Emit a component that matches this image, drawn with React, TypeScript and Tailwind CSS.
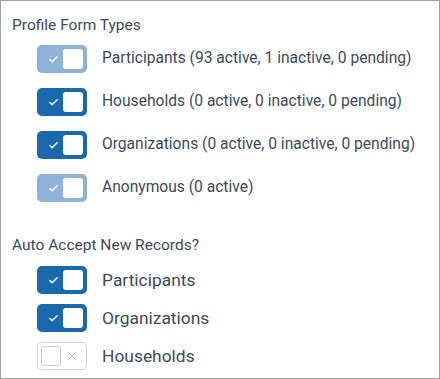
import { Check, X } from 'lucide-react'

type ToggleState = 'on' | 'disabled' | 'off'

function Toggle({ state }: { state: ToggleState }) {
  if (state === 'off') {
    return (
      <div className="flex h-[28px] w-[50px] shrink-0 items-center rounded-[5px] border border-[#d0d4d9] bg-white px-[3px]">
        <div className="h-[20px] w-[20px] rounded-[3px] border border-[#c6cbd1] bg-white" />
        <X className="ml-[5px] h-[12px] w-[12px] text-[#b8bec6]" strokeWidth={2} />
      </div>
    )
  }
  const bg = state === 'on' ? 'bg-[#1b69ad]' : 'bg-[#8db3d8]'
  return (
    <div className={`flex h-[28px] w-[50px] shrink-0 items-center justify-between rounded-[5px] ${bg} pl-[11px] pr-[4px]`}>
      <Check className="h-[11px] w-[11px] text-white" strokeWidth={3} />
      <div className="h-[20px] w-[20px] rounded-[3px] bg-white" />
    </div>
  )
}

const profileTypes: { label: string; state: ToggleState }[] = [
  { label: 'Participants (93 active, 1 inactive, 0 pending)', state: 'disabled' },
  { label: 'Households (0 active, 0 inactive, 0 pending)', state: 'on' },
  { label: 'Organizations (0 active, 0 inactive, 0 pending)', state: 'on' },
  { label: 'Anonymous (0 active)', state: 'disabled' },
]

const autoAccept: { label: string; state: ToggleState }[] = [
  { label: 'Participants', state: 'on' },
  { label: 'Organizations', state: 'on' },
  { label: 'Households', state: 'off' },
]

export default function App() {
  return (
    <div className="h-[379px] w-[440px] border border-[#a3a3a3] bg-white font-['Roboto',sans-serif] text-[#3b4a5c]">
      <div className="pl-[11px] pt-[14px] text-[15.5px] leading-[20px]">Profile Form Types</div>
      <div className="mt-[10px] flex flex-col gap-[15px] pl-[36px]">
        {profileTypes.map(t => (
          <div key={t.label} className="flex items-center gap-[15px]">
            <Toggle state={t.state} />
            <span className="text-[15.6px]">{t.label}</span>
          </div>
        ))}
      </div>

      <div className="mt-[33px] pl-[11px] text-[15.5px] leading-[20px]">Auto Accept New Records?</div>
      <div className="mt-[11px] flex flex-col gap-[10px] pl-[36px]">
        {autoAccept.map(t => (
          <div key={t.label} className="flex items-center gap-[15px]">
            <Toggle state={t.state} />
            <span className="text-[17.4px]">{t.label}</span>
          </div>
        ))}
      </div>
    </div>
  )
}
